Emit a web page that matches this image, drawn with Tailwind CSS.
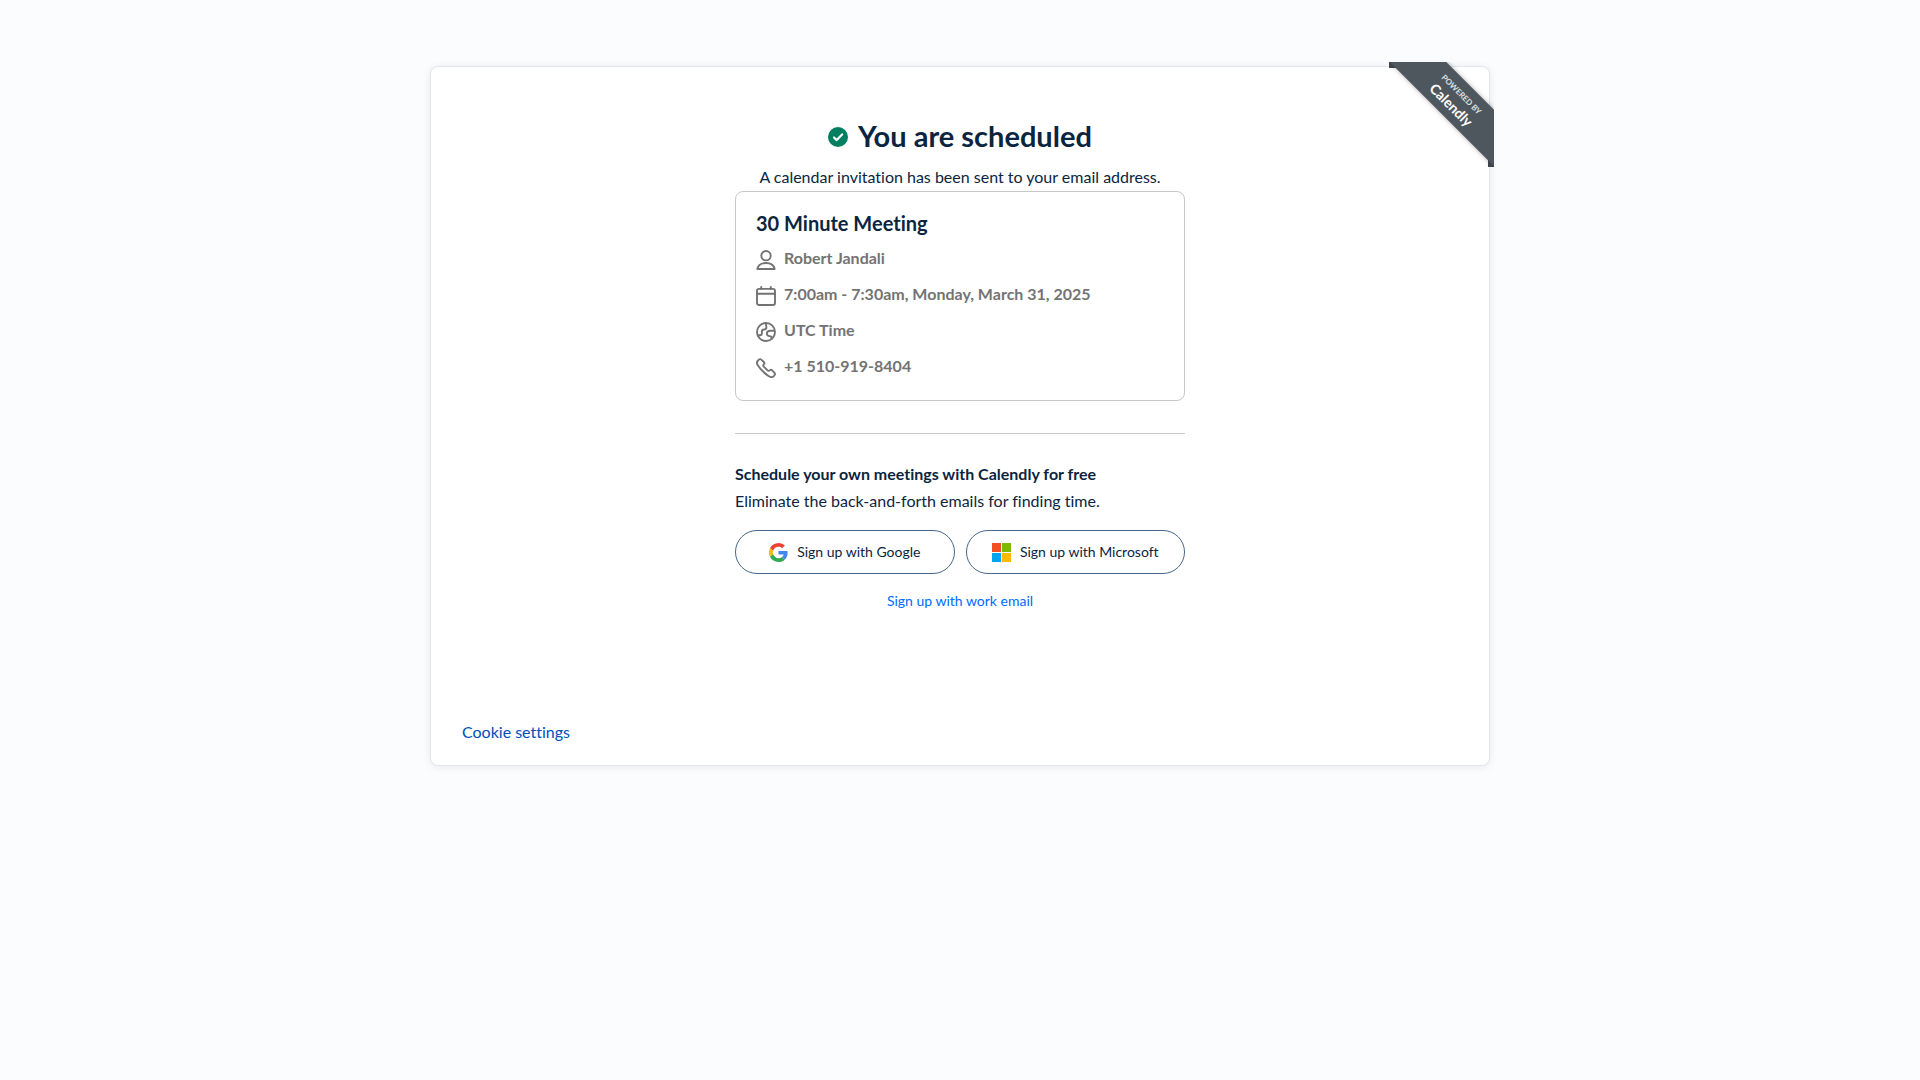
<!DOCTYPE html>
<html lang="en">
<head>
<meta charset="utf-8">
<meta name="viewport" content="width=device-width, initial-scale=1">
<title>You are scheduled - Calendly</title>
<script src="https://cdn.jsdelivr.net/npm/@tailwindcss/browser@4"></script>
</head>
<body class="min-h-screen bg-[#fbfcfe] px-4 py-[66px] font-['Lato',sans-serif] text-base leading-6 text-[#0b2540] [font-variant-ligatures:none]">
<main class="relative mx-auto flex min-h-[700px] max-w-[1060px] flex-col rounded-lg border border-[#e4e6e9] bg-white shadow-[0_1px_8px_0_rgba(0,0,0,0.08)]">

  <!-- Corner ribbon -->
  <a href="#" class="absolute -top-[5px] -right-[5px] size-[105px] overflow-hidden text-white">
    <span class="absolute top-0 left-0 h-[6px] w-3 bg-[#434b52]"></span>
    <span class="absolute right-0 bottom-0 h-3 w-[6px] bg-[#434b52]"></span>
    <span class="absolute top-[18px] -left-[13px] flex h-10 w-[160px] rotate-45 flex-col items-center justify-center bg-[#4f575e] shadow-[0_0_5px_rgba(0,0,0,0.3)]">
      <span class="text-[8px] leading-[14px] font-bold text-[#dfe1e3]">POWERED BY</span>
      <span class="text-sm leading-4 font-bold">Calendly</span>
    </span>
  </a>

  <div class="mx-auto w-full max-w-[450px] grow pt-[49px]">
    <div class="flex items-center justify-center gap-[10px]">
      <svg class="mt-[1px] size-5" viewBox="0 0 20 20" aria-hidden="true"><circle cx="10" cy="10" r="10" fill="#008060"/><path d="M6 10.5l2.7 2.6 5.4-5.7" fill="none" stroke="#fff" stroke-width="2.2" stroke-linecap="round" stroke-linejoin="round"/></svg>
      <h1 class="text-[29px] leading-10 font-bold">You are scheduled</h1>
    </div>
    <p class="mt-[9px] text-center">A calendar invitation has been sent to your email address.</p>

    <section class="mt-[2px] rounded-lg border border-[#c9c9c9] px-5 pt-[19px] pb-[22px]">
      <h2 class="text-xl leading-6 font-bold">30 Minute Meeting</h2>
      <ul class="mt-[11px] flex flex-col gap-3 font-bold text-[#737373]">
        <li class="flex items-center gap-2">
          <svg class="mt-1 size-5 shrink-0" viewBox="0 0 20 20" fill="none" stroke="currentColor" stroke-width="1.900" stroke-linejoin="round" aria-hidden="true"><circle cx="10" cy="5.7" r="4.700"/><path d="M1.300 19c.8-3.700 4.200-6 8.700-6s7.900 2.300 8.700 6z"/></svg>
          Robert Jandali
        </li>
        <li class="flex items-center gap-2">
          <svg class="mt-1 size-5 shrink-0" viewBox="0 0 20 20" fill="none" stroke="currentColor" stroke-width="1.900" stroke-linecap="round" aria-hidden="true"><rect x="1" y="2.900" width="18" height="16.100" rx="2"/><path d="M1 7.700h18M5.200 1v2M14.800 1v2"/></svg>
          7:00am - 7:30am, Monday, March 31, 2025
        </li>
        <li class="flex items-center gap-2">
          <svg class="mt-1 size-5 shrink-0" viewBox="0 0 20 20" fill="none" stroke="currentColor" stroke-width="1.900" aria-hidden="true"><circle cx="10" cy="10" r="9"/><path d="M1.200 13.300H4c1.300 0 1.900-.8 1.900-2V9.700c0-1.500.9-2.200 2.200-2.200 1.500 0 2.300-.9 2.300-2.200 0-1.600-.6-1.900-.6-4M18.900 8.800h-4.600c-2.200 0-3.400 1.100-3.400 2.800s1.200 2.500 2.800 2.500c1.300 0 1.900.6 1.900 1.800v1.700"/></svg>
          UTC Time
        </li>
        <li class="flex items-center gap-2">
          <svg class="mt-1 size-5 shrink-0" viewBox="0 0 20 20" fill="none" stroke="currentColor" stroke-width="1.900" stroke-linejoin="round" aria-hidden="true"><path d="M12.900 18.300c1.700 1.100 3.800.9 5.200-.5l.4-.6c.7-.7.7-1.700 0-2.400l-2.300-2.400c-.7-.7-1.700-.7-2.400 0-.6.600-1.600.6-2.200 0L7.800 8.600c-.6-.6-.6-1.600 0-2.200.7-.7.7-1.700 0-2.400L5.300 1.600c-.7-.7-1.700-.7-2.400 0l-.6.600C.9 3.400.7 5.500 1.800 7.200c2.900 4.400 6.700 8.200 11.100 11.100z"/></svg>
          +1 510-919-8404
        </li>
      </ul>
    </section>

    <hr class="mt-8 border-[#c9c9c9]">

    <h2 class="mt-7 leading-6 font-bold">Schedule your own meetings with Calendly for free</h2>
    <p class="mt-[3px]">Eliminate the back-and-forth emails for finding time.</p>
    <div class="mt-[17px] grid grid-cols-2 gap-[11px] text-sm">
      <button type="button" class="flex h-11 items-center justify-center gap-[9px] rounded-full border border-[#476788]">
        <svg class="size-[19px]" viewBox="0 0 48 48" aria-hidden="true"><path fill="#EA4335" d="M24 9.500c3.540 0 6.710 1.220 9.210 3.600l6.850-6.850C35.900 2.380 30.470 0 24 0 14.620 0 6.510 5.380 2.560 13.220l7.980 6.190C12.430 13.720 17.740 9.500 24 9.500z"/><path fill="#4285F4" d="M46.980 24.550c0-1.570-.15-3.090-.38-4.550H24v9.020h12.940c-.58 2.960-2.260 5.480-4.780 7.180l7.730 6c4.510-4.180 7.090-10.360 7.090-17.650z"/><path fill="#FBBC05" d="M10.530 28.590c-.48-1.450-.76-2.990-.76-4.590s.27-3.140.76-4.590l-7.980-6.190C.92 16.460 0 20.120 0 24c0 3.880.92 7.540 2.560 10.780l7.970-6.190z"/><path fill="#34A853" d="M24 48c6.480 0 11.930-2.130 15.890-5.810l-7.730-6c-2.150 1.450-4.920 2.300-8.160 2.300-6.260 0-11.570-4.220-13.470-9.910l-7.980 6.190C6.510 42.620 14.620 48 24 48z"/></svg>
        Sign up with Google
      </button>
      <button type="button" class="flex h-11 items-center justify-center gap-[9px] rounded-full border border-[#476788]">
        <svg class="size-[19px]" viewBox="0 0 19 19" aria-hidden="true"><path fill="#f25022" d="M0 0h9v9H0z"/><path fill="#7fba00" d="M10 0h9v9h-9z"/><path fill="#00a4ef" d="M0 10h9v9H0z"/><path fill="#ffb900" d="M10 10h9v9h-9z"/></svg>
        Sign up with Microsoft
      </button>
    </div>
    <p class="mt-[15px] text-center text-sm leading-6"><a href="#" class="text-[#006bff]">Sign up with work email</a></p>
  </div>

  <footer class="px-[31px] pb-[21px]"><a href="#" class="text-[#004eba]">Cookie settings</a></footer>
</main>
</body>
</html>
